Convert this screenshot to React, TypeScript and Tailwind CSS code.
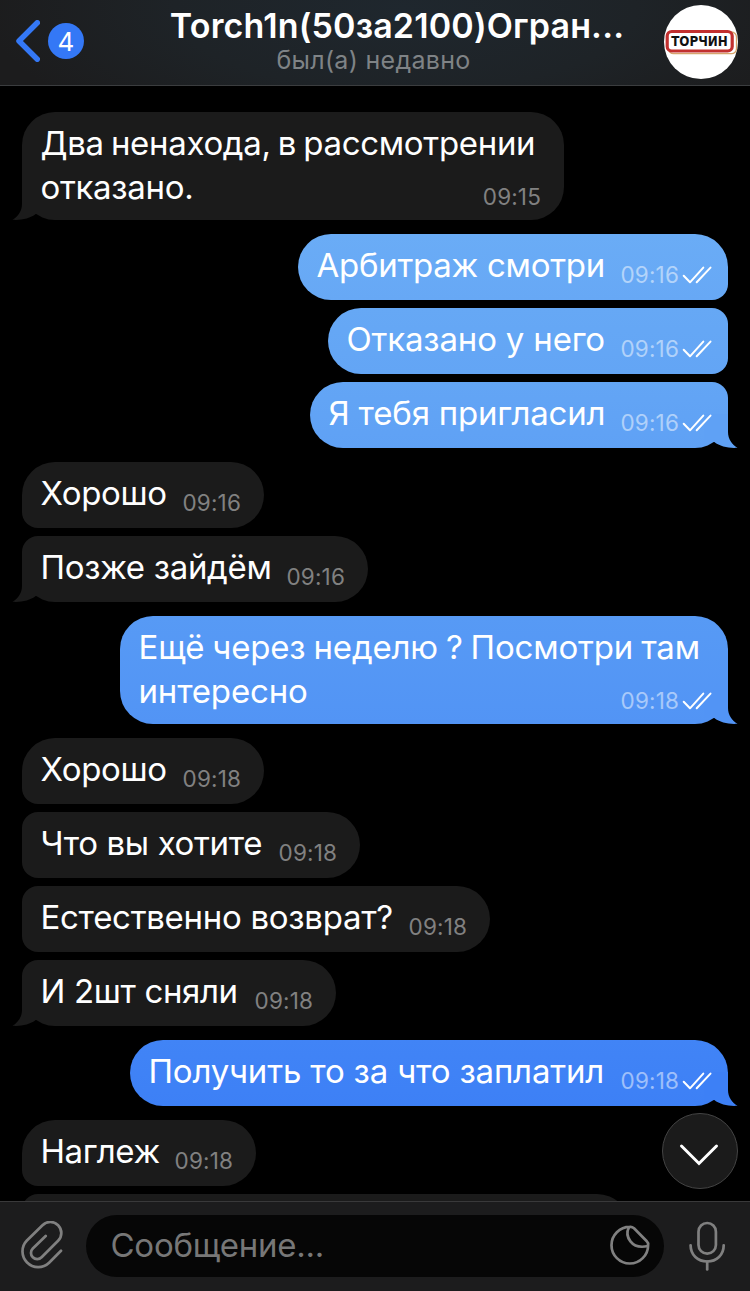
import clsx from 'clsx'

type Message = {
  id: number
  text: string
  time: string
  out?: boolean
  // bubble width and height
  size: string
  // letter and word spacing of the text
  track?: string
  fill?: string
  tailFill?: string
  first?: boolean
  last?: boolean
}

const messages: Message[] = [
  { id: 1, text: 'Два ненахода, в рассмотрении\nотказано.', time: '09:15', size: 'w-[542px] h-[108px]', track: 'tracking-[-0.32px] [word-spacing:-1.8px]', first: true, last: true },
  { id: 2, text: 'Арбитраж смотри', time: '09:16', out: true, size: 'w-[430px] h-[66px]', track: 'tracking-[-0.28px]', fill: 'bg-linear-to-b from-[#6aacf6] to-[#67a8f5]', first: true },
  { id: 3, text: 'Отказано у него', time: '09:16', out: true, size: 'w-[400px] h-[66px]', track: 'tracking-[-0.18px]', fill: 'bg-linear-to-b from-[#66a8f5] to-[#63a5f5]' },
  { id: 4, text: 'Я тебя пригласил', time: '09:16', out: true, size: 'w-[418px] h-[66px]', track: 'tracking-[-0.2px]', fill: 'bg-linear-to-b from-[#63a5f5] to-[#5fa1f5]', tailFill: 'text-[#5fa1f5]', last: true },
  { id: 5, text: 'Хорошо', time: '09:16', size: 'w-[242px] h-[66px]', track: 'tracking-[-0.36px]', first: true },
  { id: 6, text: 'Позже зайдём', time: '09:16', size: 'w-[346px] h-[66px]', track: 'tracking-[-0.32px]', last: true },
  { id: 7, text: 'Ещё через неделю ? Посмотри там\nинтересно', time: '09:18', out: true, size: 'w-[608px] h-[108px]', track: 'tracking-[-0.18px] [word-spacing:-1.1px]', fill: 'bg-linear-to-b from-[#579af5] to-[#5294f5]', tailFill: 'text-[#5294f5]', first: true, last: true },
  { id: 8, text: 'Хорошо', time: '09:18', size: 'w-[242px] h-[66px]', track: 'tracking-[-0.36px]', first: true },
  { id: 9, text: 'Что вы хотите', time: '09:18', size: 'w-[338px] h-[66px]', track: 'tracking-[-0.36px]' },
  { id: 10, text: 'Естественно возврат?', time: '09:18', size: 'w-[468px] h-[66px]', track: 'tracking-[-0.29px]' },
  { id: 11, text: 'И 2шт сняли', time: '09:18', size: 'w-[314px] h-[66px]', track: 'tracking-[-0.36px]', last: true },
  { id: 12, text: 'Получить то за что заплатил', time: '09:18', out: true, size: 'w-[598px] h-[66px]', track: 'tracking-[-0.18px]', fill: 'bg-linear-to-b from-[#4184f6] to-[#3d80f6]', tailFill: 'text-[#3d80f6]', first: true, last: true },
  { id: 13, text: 'Наглеж', time: '09:18', size: 'w-[234px] h-[66px]', track: 'tracking-[-0.4px]', first: true },
  { id: 14, text: '', time: '', size: 'w-[608px] h-[66px]' },
]

function Checks() {
  return (
    <svg width="30" height="18" viewBox="0 0 30 18" fill="none" stroke="#fff" strokeWidth="2" strokeLinecap="round" strokeLinejoin="round">
      <path d="M1.700 9.800 L8 16.300 L21.300 1.600" />
      <path d="M14.700 16.300 L28.500 1.600" />
    </svg>
  )
}

function Tail({ className }: { className?: string }) {
  return (
    <svg className={clsx('absolute bottom-0', className)} width="34" height="34" viewBox="0 0 34 34" fill="currentColor">
      <path d="M0 0 H24 V18 C24 25 28 30.500 33.500 33.800 C25 34.500 16 32.500 10.300 28 L0 28 Z" />
    </svg>
  )
}

function Bubble({ m }: { m: Message }) {
  return (
    <div
      className={clsx(
        'relative flex shrink-0 pl-[18.5px] pt-[9px]',
        m.size,
        m.out ? 'self-end rounded-l-[33px]' : 'self-start rounded-r-[33px] bg-[#1b1b1b]',
        m.out && (m.first ? 'rounded-tr-[33px]' : 'rounded-tr-[16px]'),
        m.out && (m.last ? 'rounded-br-[33px]' : 'rounded-br-[16px]'),
        !m.out && (m.first ? 'rounded-tl-[33px]' : 'rounded-tl-[16px]'),
        !m.out && (m.last ? 'rounded-bl-[33px]' : 'rounded-bl-[16px]'),
        m.fill,
        m.first ? 'mt-[14px]' : 'mt-2',
      )}
    >
      {m.last && (
        <Tail className={m.out ? clsx('-right-[10px]', m.tailFill) : '-left-[10px] -scale-x-100 text-[#1b1b1b]'} />
      )}
      <p className={clsx('relative flex flex-col whitespace-pre text-[33px] leading-[44px] text-white', m.track)}>
        {m.text.split('\n').map((line) => (
          <span key={line} className="self-start">{line}</span>
        ))}
      </p>
      <div
        className={clsx(
          'absolute flex items-center',
          m.text.includes('\n') ? 'bottom-[9px]' : 'bottom-[11px]',
          m.out ? 'right-[16px] gap-[3px] text-white/50' : 'right-[23px] text-[#818181]',
        )}
      >
        <span className="text-[22.5px] leading-[28px] tracking-[0.15px]">{m.time}</span>
        {m.out && <Checks />}
      </div>
    </div>
  )
}

function Header() {
  return (
    <header className="relative flex h-[86px] shrink-0 items-start justify-between border-b border-[#3b3d3f] bg-[radial-gradient(ellipse_420px_150px_at_54%_10%,#1f272e_0%,#1e2327_55%,#1c1c1d_100%)] pl-4 pr-3">
      <div className="mt-5 flex items-center gap-2">
        <svg width="24" height="42" viewBox="0 0 24 42" fill="none" stroke="#3478f6" strokeWidth="5.500" strokeLinecap="round" strokeLinejoin="round">
          <path d="M21.300 2.800 L3 21 L21.300 39.200" />
        </svg>
        <span className="flex size-9 items-center justify-center rounded-full bg-[#3478f6] text-[26px] text-white">4</span>
      </div>
      <div className="flex flex-col items-center whitespace-nowrap pl-[46px]">
        <h1 className="text-[34px] font-semibold leading-[51px] tracking-[0.16px] text-white">Torch1n(50за2100)Огран...</h1>
        <p className="-mt-[6px] mr-[47px] text-[25px] leading-[30px] tracking-[0.3px] text-[#7f8386]">был(а) недавно</p>
      </div>
      <div className="mt-[5px] flex size-[74px] items-center justify-center overflow-hidden rounded-full bg-white">
        <svg width="74" height="74" viewBox="0 0 74 74">
          <rect x="4.500" y="27" width="68" height="21.700" rx="5" fill="none" stroke="#d6a56c" strokeWidth="1.300" />
          <rect x="3.200" y="26.500" width="65" height="19.500" rx="4.500" fill="#fff" stroke="#c2302f" strokeWidth="3.200" />
          <text x="35.500" y="41" textAnchor="middle" textLength="56.5" lengthAdjust="spacingAndGlyphs" fill="#111" className="font-['DejaVu_Sans'] text-[13.5px] font-bold">
            ТОРЧИН
          </text>
        </svg>
      </div>
    </header>
  )
}

function InputBar() {
  return (
    <footer className="flex h-[90px] shrink-0 items-start border-t border-[#39393a] bg-[#1c1c1d] pt-[13px] text-[#808080]">
      <svg className="ml-[20px] mt-[6px]" width="46" height="50" viewBox="0 0 46 50" fill="none" stroke="currentColor" strokeWidth="2.700" strokeLinecap="round" strokeLinejoin="round">
        <path d="M25.700 15 L12.800 27.500 A6.200 6.200 0 0 0 21.600 36.300 L38.100 19.800 A11 11 0 0 0 22.500 4.200 L6.900 19.500 A15.700 15.700 0 0 0 29.100 41.700 L41 29.700" />
      </svg>
      <div className="ml-[20px] flex h-[62px] w-[578px] items-center justify-between rounded-full bg-[#060606] pl-[24.5px] pr-[13px]">
        <span className="-mt-[2px] text-[33px] leading-[44px] tracking-[-0.25px] text-[#777]">Сообщение...</span>
        <svg className="-mt-[2px]" width="42" height="42" viewBox="0 0 42 42" fill="none" stroke="currentColor" strokeWidth="2.700" strokeLinejoin="round">
          <path d="M20.800 2.900 A18.300 18.300 0 1 0 39.100 21.200 Q39.500 18.800 37.800 17.200 L25 4.200 Q23 2.600 20.800 2.900 Z" />
          <path d="M20 3 C15.500 12 22 26 39 22" />
        </svg>
      </div>
      <svg className="ml-[24px] mt-[5px]" width="38" height="52" viewBox="0 0 38 52" fill="none" stroke="currentColor" strokeWidth="2.700" strokeLinecap="round">
        <rect x="10.500" y="3" width="17.400" height="30.700" rx="8.700" />
        <path d="M2.600 25.300 C2.600 35 9.700 41.500 19.200 41.500 C28.700 41.500 35.700 35 35.700 25.300" />
        <path d="M19.200 41.500 V49.500" />
      </svg>
    </footer>
  )
}

export default function App() {
  return (
    <div className="flex h-[1291px] w-[750px] flex-col overflow-hidden bg-black font-['Inter',sans-serif]">
      <Header />
      <main className="relative flex min-h-0 flex-1 flex-col overflow-hidden px-[22px] pt-3">
        {messages.map((m) => (
          <Bubble key={m.id} m={m} />
        ))}
        <button type="button" aria-label="Вниз" className="absolute bottom-3 right-3 flex size-[76px] items-center justify-center rounded-full border border-[#444] bg-[#1b1b1b]">
          <svg className="mt-[7px] -ml-[2px]" width="40" height="24" viewBox="0 0 40 24" fill="none" stroke="#fff" strokeWidth="3" strokeLinecap="round" strokeLinejoin="miter">
            <path d="M2.500 3 L20 20.500 L37.500 3" />
          </svg>
        </button>
      </main>
      <InputBar />
    </div>
  )
}
